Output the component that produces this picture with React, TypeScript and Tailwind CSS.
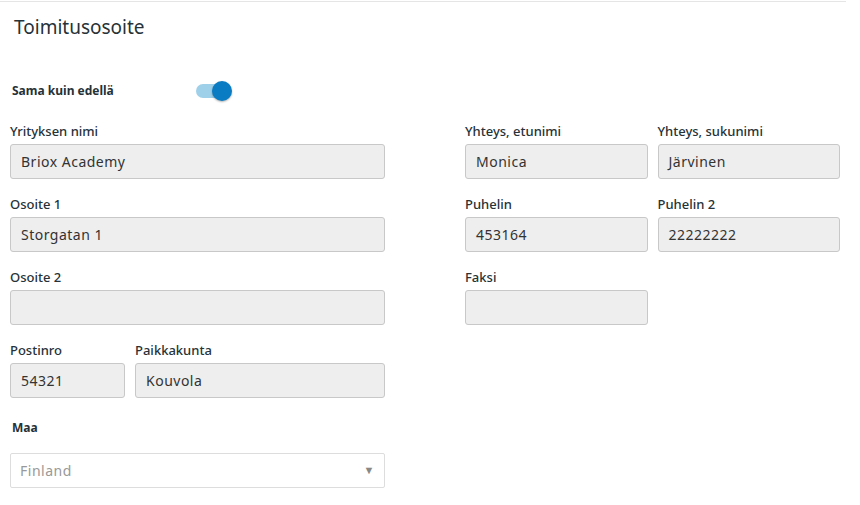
import React from 'react';

const Field = ({ label, value = '', className = '' }: { label: string; value?: string; className?: string }) => (
  <div className={className}>
    <div className="text-[13px] font-medium text-[#263238] leading-4 h-[18px]">{label}</div>
    <div className="mt-[3px] h-[35px] rounded-[3px] border border-[#c8c8c8] bg-[#eeeeee] px-[10px] flex items-center text-[14px] tracking-[0.5px] text-[#333]">
      {value}
    </div>
  </div>
);

export default function App() {
  return (
    <div className="w-[860px] h-[505px] bg-white font-['Roboto',sans-serif] relative">
      <div className="mx-0 w-[846px] border-t border-[#e5e5e5] mt-[1px]" />
      <h2 className="pl-[14px] pt-[13px] text-[19px] text-[#263238] leading-6">Toimitusosoite</h2>
      <div className="flex items-center mt-[44px] pl-[12px] h-[16px]">
        <span className="w-[184px] text-[12px] font-bold text-[#263238]">Sama kuin edellä</span>
        <div className="relative w-[34px] h-[14px]">
          <div className="absolute inset-0 rounded-full bg-[#9fd0ea]" />
          <div className="absolute right-[-2px] top-[-3px] w-[20px] h-[20px] rounded-full bg-[#0a7cc4] shadow-[0_1px_2px_rgba(0,0,0,0.3)]" />
        </div>
      </div>
      <div className="flex pl-[10px] mt-[24px] gap-[80px]">
        <div className="w-[375px] flex flex-col gap-[17px]">
          <Field label="Yrityksen nimi" value="Briox Academy" />
          <Field label="Osoite 1" value="Storgatan 1" />
          <Field label="Osoite 2" />
          <div className="flex gap-[10px]">
            <Field className="w-[115px]" label="Postinro" value="54321" />
            <Field className="flex-1" label="Paikkakunta" value="Kouvola" />
          </div>
          <div className="pl-[2px] text-[12px] font-bold text-[#263238] mt-[4px]">Maa</div>
          <div className="-mt-[1px] h-[35px] rounded-[2px] border border-[#dddddd] bg-white px-[9px] flex items-center justify-between text-[14px] tracking-[0.5px] text-[#999]">
            <span>Finland</span>
            <span className="text-[11px] text-[#888]">▼</span>
          </div>
        </div>
        <div className="w-[375px] grid grid-cols-2 gap-x-[10px] gap-y-[17px] content-start">
          <Field label="Yhteys, etunimi" value="Monica" />
          <Field label="Yhteys, sukunimi" value="Järvinen" />
          <Field label="Puhelin" value="453164" />
          <Field label="Puhelin 2" value="22222222" />
          <Field label="Faksi" />
        </div>
      </div>
    </div>
  );
}
